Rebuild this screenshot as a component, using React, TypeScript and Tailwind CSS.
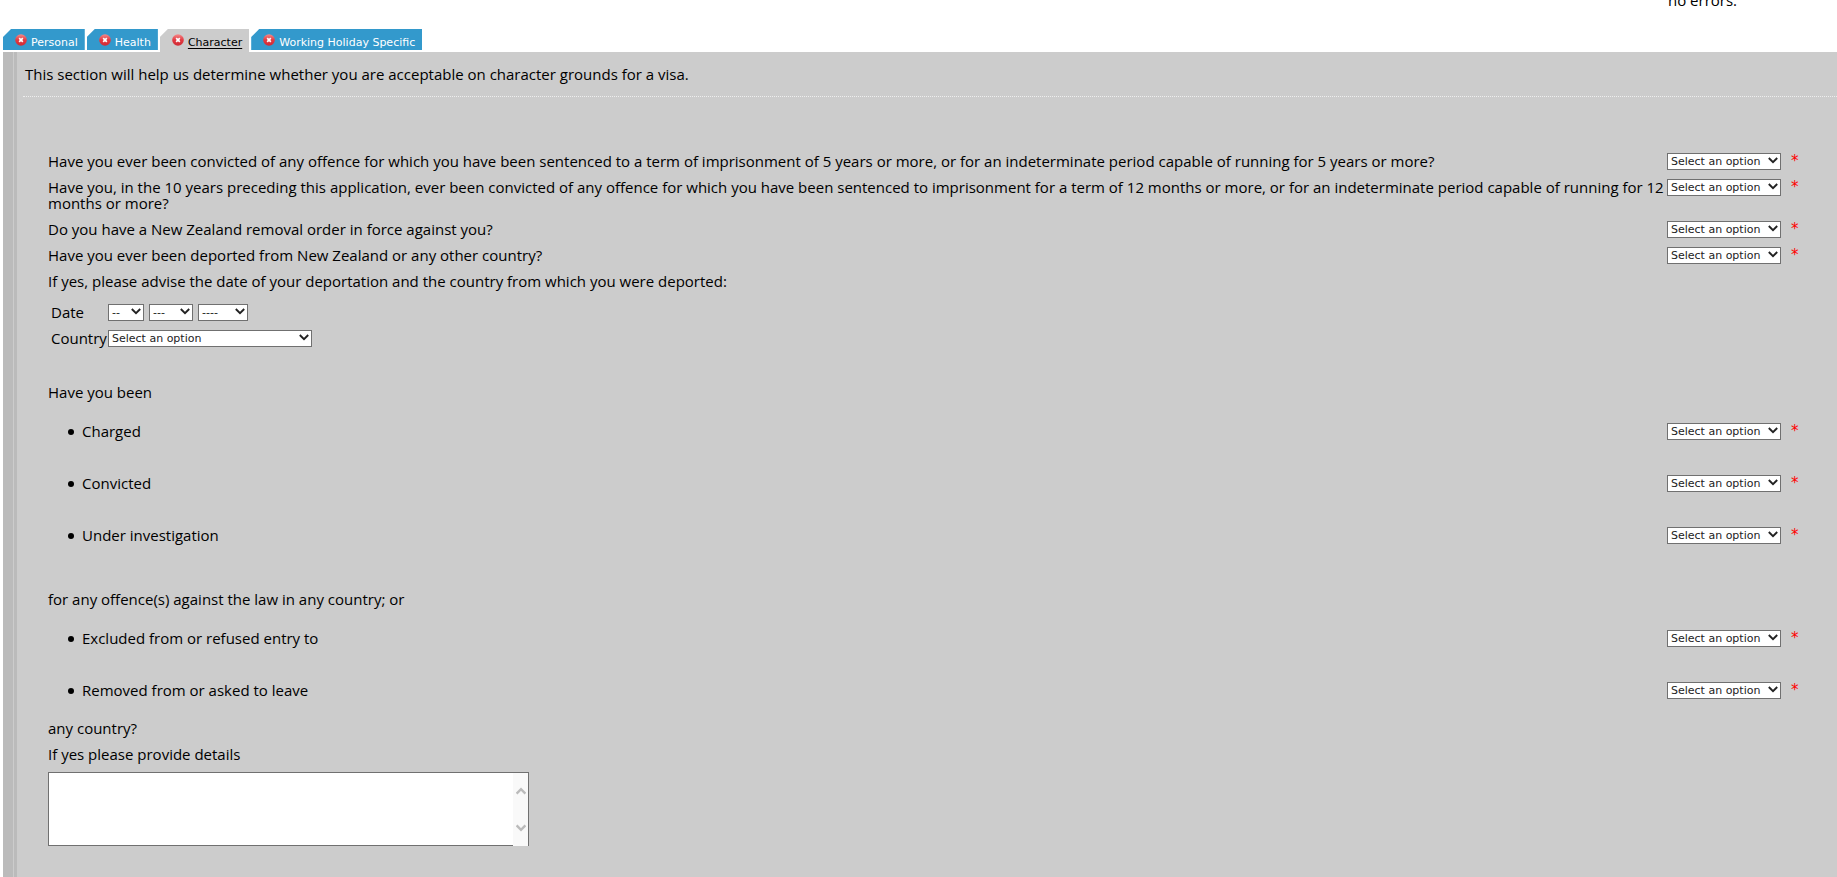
import type { ReactNode } from 'react';
import clsx from 'clsx';

const TABS = ['Personal', 'Health', 'Character', 'Working Holiday Specific'];

/* Round red badge shown on tabs that still have errors */
function ErrorIcon() {
  return (
    <svg width="12" height="12" viewBox="0 0 12 12" className="shrink-0" aria-hidden="true">
      <defs>
        <linearGradient id="badge" x1="0" y1="0" x2="0" y2="1">
          <stop offset="0" stopColor="#f58a8a" />
          <stop offset="0.5" stopColor="#e23a42" />
          <stop offset="1" stopColor="#cf2a34" />
        </linearGradient>
      </defs>
      <circle cx="6" cy="6" r="5.8" fill="url(#badge)" />
      <path d="M4.2 4.2l3.6 3.6M7.8 4.2L4.2 7.8" stroke="#fff" strokeWidth="1.7" />
    </svg>
  );
}

function Select({ id, label, text = 'Select an option', className }: {
  id: string;
  label?: string;
  text?: string;
  className: string;
}) {
  return (
    <span className={clsx('relative block h-[17px]', className)}>
      <select
        id={id}
        aria-label={label}
        className="block h-full w-full appearance-none border border-[#707070] bg-white pl-[3px] font-['Verdana','DejaVu_Sans',sans-serif] text-[11px] leading-[15px] text-[#222]"
      >
        <option>{text}</option>
      </select>
      <svg
        width="10"
        height="7"
        viewBox="0 0 10 7"
        className="pointer-events-none absolute top-1 right-[3px]"
        aria-hidden="true"
      >
        <path d="M0.8 1L5 5.2L9.2 1" fill="none" stroke="#222" strokeWidth="1.9" />
      </svg>
    </span>
  );
}

/* A question on the left, its required drop-down on the right */
function Question({ id, children, bullet }: { id: string; children: ReactNode; bullet?: boolean }) {
  return (
    <div className="flex items-start py-[5px]">
      <div className="min-w-0 flex-1">
        {bullet && <span className="mr-2 ml-5 inline-block size-[6px] rounded-full bg-black align-[2px]" />}
        <label htmlFor={id}>{children}</label>
      </div>
      <div className="flex h-4 w-[170px] shrink-0">
        <Select id={id} className="w-[114px]" />
        <span className="ml-[10px] font-['Verdana','DejaVu_Sans',sans-serif] text-[15px] text-[#f00]" aria-hidden="true">*</span>
      </div>
    </div>
  );
}

function Line({ children }: { children: ReactNode }) {
  return <p className="py-[5px]">{children}</p>;
}

export default function App() {
  return (
    <div className="flex min-h-screen flex-col overflow-x-hidden bg-white font-['Verdana','Open_Sans',sans-serif] text-[15px] leading-4 text-black">
      <header className="flex h-[29px] justify-end overflow-hidden">
        <p className="-mt-2 w-[169px]">no errors.</p>
      </header>

      <nav className="ml-[3px] flex gap-[2px] font-['Verdana','DejaVu_Sans',sans-serif]">
        {TABS.map((tab) => {
          const active = tab === 'Character';
          return (
            <a
              key={tab}
              href="#"
              className={clsx(
                'flex items-center gap-1 pl-3 pr-[7px] text-[11px] [clip-path:polygon(8px_0,100%_0,100%_100%,0_100%,0_8px)]',
                active ? 'h-[23px] bg-[#ccc] pb-[2px] text-black' : 'h-[21px] bg-[#39c] text-white',
              )}
            >
              <ErrorIcon />
              <span className={clsx('pt-[6px] leading-4', active && 'underline underline-offset-2')}>{tab}</span>
            </a>
          );
        })}
      </nav>

      <main className="ml-[3px] flex flex-1 bg-[#ccc]">
        <div className="w-[14px] shrink-0 border-r-3 border-[#bbb] bg-[#bbb]">
          <div className="h-full border-r border-[#ccc]" />
        </div>

        <div className="min-w-0 flex-1">
          <p className="pt-[14px] pl-2">
            This section will help us determine whether you are acceptable on character grounds for a visa.
          </p>
          <hr className="mt-[14px] ml-[6px] border-t border-dotted border-[#eee]" />

          <form className="mt-[51px] ml-[31px]">
            <Question id="q1">
              Have you ever been convicted of any offence for which you have been sentenced to a term of imprisonment
              of 5 years or more, or for an indeterminate period capable of running for 5 years or more?
            </Question>
            <Question id="q2">
              Have you, in the 10 years preceding this application, ever been convicted of any offence for which you
              have been sentenced to imprisonment for a term of 12 months or more, or for an indeterminate period
              capable of running for 12 months or more?
            </Question>
            <Question id="q3">Do you have a New Zealand removal order in force against you?</Question>
            <Question id="q4">Have you ever been deported from New Zealand or any other country?</Question>
            <Line>If yes, please advise the date of your deportation and the country from which you were deported:</Line>

            <div className="mt-[5px] ml-[3px] flex flex-col">
              <div className="flex h-[26px] py-[5px]">
                <label htmlFor="day" className="w-[57px]">Date</label>
                <div className="flex gap-[5px]">
                  <Select id="day" text="--" className="w-[36px]" />
                  <Select id="month" label="Month" text="---" className="w-[44px]" />
                  <Select id="year" label="Year" text="----" className="w-[50px]" />
                </div>
              </div>
              <div className="flex h-[26px] py-[5px]">
                <label htmlFor="country" className="w-[57px]">Country</label>
                <Select id="country" className="w-[204px]" />
              </div>
            </div>

            <div className="mt-7">
              <Line>Have you been</Line>
            </div>
            <div className="mt-[13px] flex flex-col gap-[26px]">
              <Question id="charged" bullet>Charged</Question>
              <Question id="convicted" bullet>Convicted</Question>
              <Question id="investigation" bullet>Under investigation</Question>
            </div>

            <div className="mt-[38px]">
              <Line>for any offence(s) against the law in any country; or</Line>
            </div>
            <div className="mt-[13px] flex flex-col gap-[26px]">
              <Question id="excluded" bullet>Excluded from or refused entry to</Question>
              <Question id="removed" bullet>Removed from or asked to leave</Question>
            </div>

            <div className="mt-3">
              <Line>any country?</Line>
              <label htmlFor="details" className="block py-[5px]">If yes please provide details</label>
            </div>
            <div className="relative mt-[5px] mb-[31px] h-[74px] w-[481px]">
              <textarea
                id="details"
                className="block h-full w-full resize-none border border-[#707070] bg-white p-1"
              />
              <div className="pointer-events-none absolute top-px right-px bottom-0 flex w-[15px] flex-col items-center justify-between bg-[#f9f9f9] py-[14px]">
                <svg width="10" height="8" viewBox="0 0 10 8" aria-hidden="true">
                  <path d="M0.6 6.6L5 2.2L9.4 6.6" fill="none" stroke="#bbb" strokeWidth="2.4" />
                </svg>
                <svg width="10" height="8" viewBox="0 0 10 8" aria-hidden="true">
                  <path d="M0.6 1.4L5 5.8L9.4 1.4" fill="none" stroke="#bbb" strokeWidth="2.4" />
                </svg>
              </div>
            </div>
          </form>
        </div>
      </main>
    </div>
  );
}
